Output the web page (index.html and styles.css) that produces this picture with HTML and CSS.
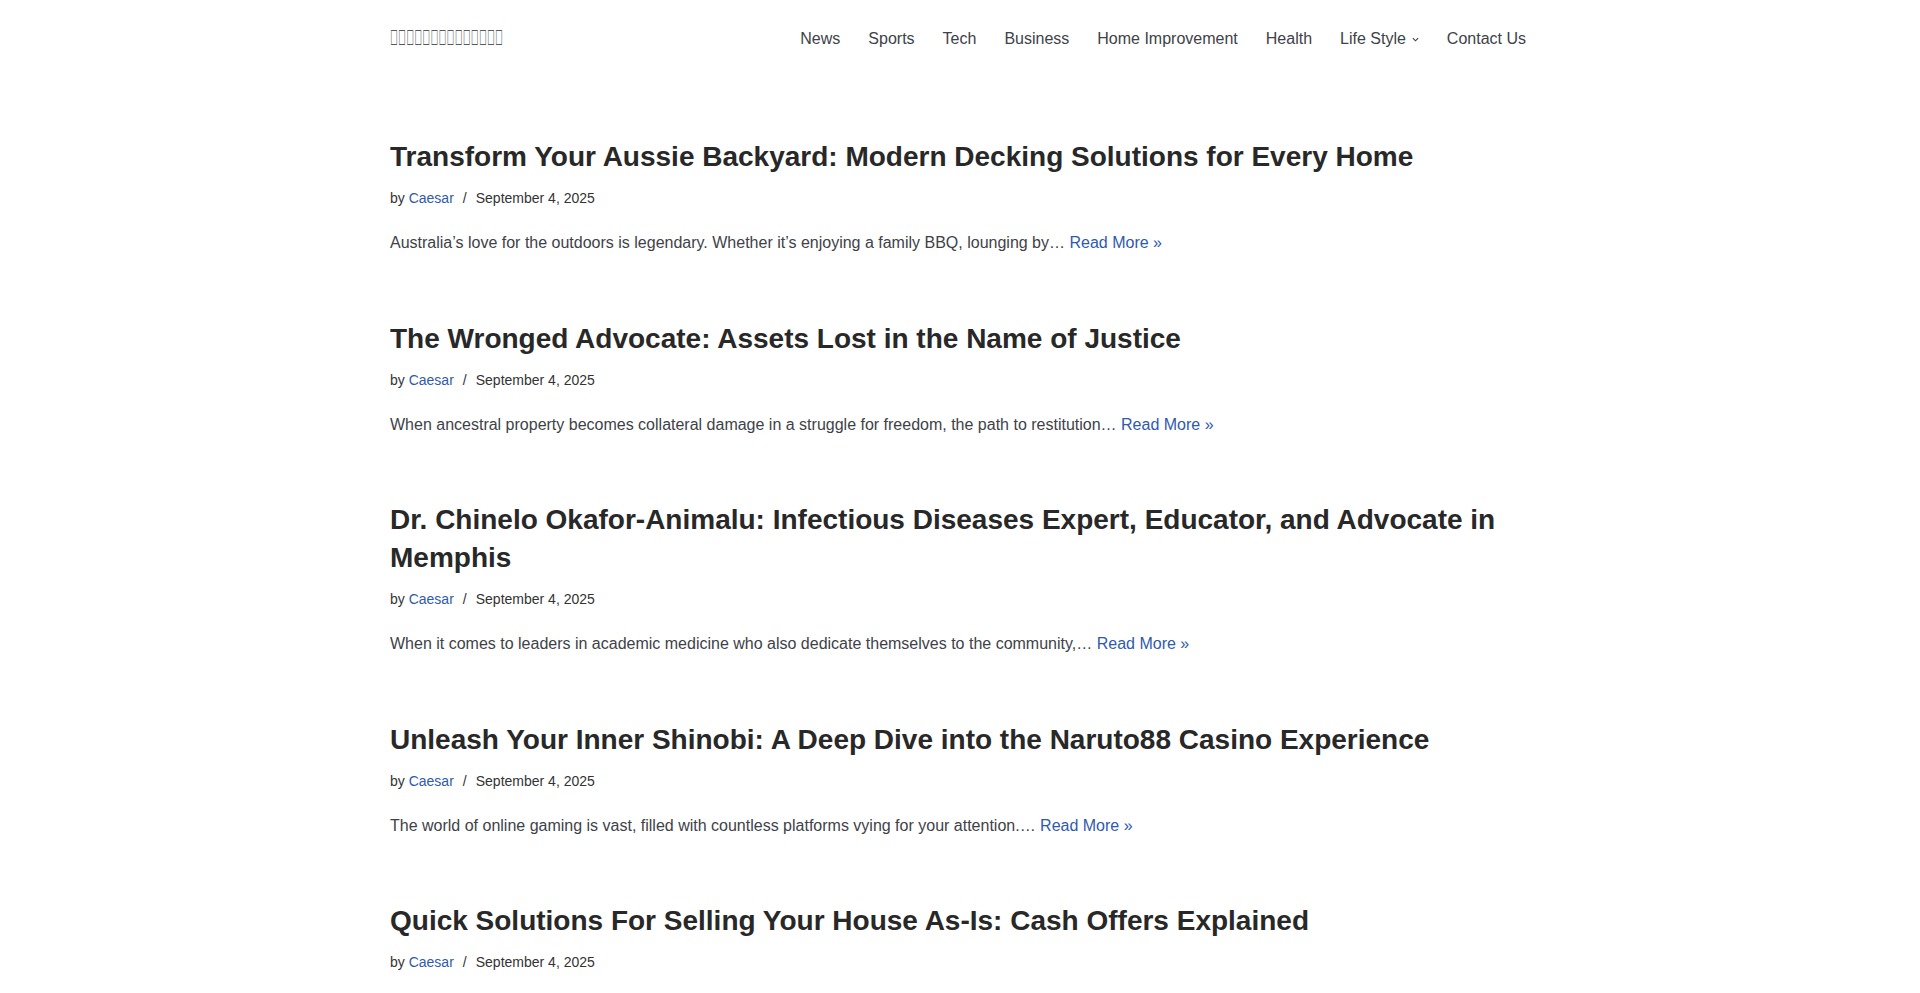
FILE: index.html
```html
<!DOCTYPE html>
<html lang="en">
<head>
<meta charset="utf-8">
<title>Blog</title>
<link rel="stylesheet" href="styles.css">
</head>
<body>
<header class="site-header">
  <div class="container header-row">
    <a class="logo" href="#"><span class="logo-text">&#xE000;&#xE001;&#xE002;&#xE003;&#xE004;&#xE005;&#xE006;&#xE007;&#xE008;&#xE009;&#xE00A;&#xE00B;&#xE00C;&#xE00D;</span></a>
    <nav class="main-nav">
      <a href="#">News</a>
      <a href="#">Sports</a>
      <a href="#">Tech</a>
      <a href="#">Business</a>
      <a href="#">Home Improvement</a>
      <a href="#">Health</a>
      <a href="#" class="has-sub">Life Style<svg class="caret" viewBox="0 0 8 5" width="7" height="5"><path d="M1 1 L4 4 L7 1" fill="none" stroke="currentColor" stroke-width="1.3"/></svg></a>
      <a href="#">Contact Us</a>
    </nav>
  </div>
</header>
<main class="container posts">
  <article class="post">
    <h2 class="post-title"><a href="#">Transform Your Aussie Backyard: Modern Decking Solutions for Every Home</a></h2>
    <p class="post-meta">by <a href="#">Caesar</a><span class="sep">/</span>September 4, 2025</p>
    <p class="post-excerpt">Australia’s love for the outdoors is legendary. Whether it’s enjoying a family BBQ, lounging by… <a href="#">Read More »</a></p>
  </article>
  <article class="post">
    <h2 class="post-title"><a href="#">The Wronged Advocate: Assets Lost in the Name of Justice</a></h2>
    <p class="post-meta">by <a href="#">Caesar</a><span class="sep">/</span>September 4, 2025</p>
    <p class="post-excerpt">When ancestral property becomes collateral damage in a struggle for freedom, the path to restitution… <a href="#">Read More »</a></p>
  </article>
  <article class="post">
    <h2 class="post-title"><a href="#">Dr. Chinelo Okafor-Animalu: Infectious Diseases Expert, Educator, and Advocate in Memphis</a></h2>
    <p class="post-meta">by <a href="#">Caesar</a><span class="sep">/</span>September 4, 2025</p>
    <p class="post-excerpt">When it comes to leaders in academic medicine who also dedicate themselves to the community,… <a href="#">Read More »</a></p>
  </article>
  <article class="post">
    <h2 class="post-title"><a href="#">Unleash Your Inner Shinobi: A Deep Dive into the Naruto88 Casino Experience</a></h2>
    <p class="post-meta">by <a href="#">Caesar</a><span class="sep">/</span>September 4, 2025</p>
    <p class="post-excerpt">The world of online gaming is vast, filled with countless platforms vying for your attention.… <a href="#">Read More »</a></p>
  </article>
  <article class="post">
    <h2 class="post-title"><a href="#">Quick Solutions For Selling Your House As-Is: Cash Offers Explained</a></h2>
    <p class="post-meta">by <a href="#">Caesar</a><span class="sep">/</span>September 4, 2025</p>
  </article>
</main>
</body>
</html>
```

FILE: styles.css
```css
* { box-sizing: border-box; }
html, body { margin: 0; padding: 0; background: #fff; }
body {
  font-family: "Liberation Sans", Arial, sans-serif;
  color: #393939;
  font-size: 16px;
  line-height: 1.5;
  overflow: hidden;
}
a { text-decoration: none; color: inherit; }
.container {
  width: 1170px;
  margin: 0 auto;
  padding: 0 15px;
}
.header-row {
  height: 77px;
  display: flex;
  align-items: center;
  justify-content: space-between;
}
.logo {
  display: block;
  width: 114px;
  overflow: visible;
  white-space: nowrap;
}
.logo-text {
  display: inline-block;
  font-family: "Liberation Sans", sans-serif;
  font-size: 22px;
  line-height: 26px;
  color: #333;
  transform: scaleX(0.49);
  transform-origin: left center;
}
.main-nav {
  display: flex;
  align-items: center;
  gap: 28px;
  padding-right: 4px;
}
.main-nav a {
  font-size: 16px;
  line-height: 24px;
  color: #404248;
  display: flex;
  align-items: center;
}
.caret {
  margin-left: 6px;
  margin-top: 1px;
}
.posts {
  padding-top: 61px;
  display: flex;
  flex-direction: column;
  gap: 64.5px;
}
.post-title {
  margin: 0;
  font-size: 28px;
  line-height: 38px;
  font-weight: 700;
  color: #282828;
}
.post-meta {
  margin: 12px 0 0;
  font-size: 14px;
  line-height: 21px;
  color: #333;
}
.post-meta a { color: #2f5aae; }
.sep { margin: 0 9px; }
.post-excerpt {
  margin: 22px 0 0;
  font-size: 16px;
  line-height: 24px;
  color: #404248;
}
.post-excerpt a { color: #2f5aae; }
```
